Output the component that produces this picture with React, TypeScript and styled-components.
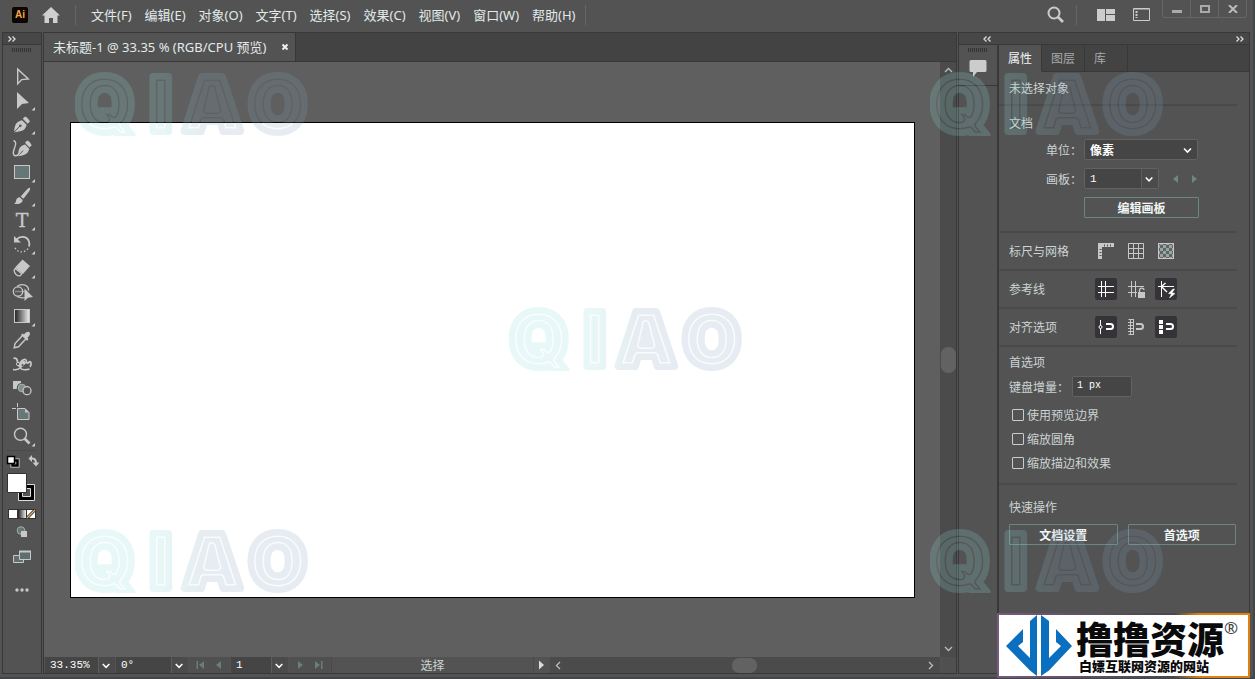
import React from "react";
import styled, { createGlobalStyle, css } from "styled-components";

const c = {
  base: "#535353",
  dark: "#434343",
  head: "#474747",
  line: "#383838",
  rule: "#4a4a4a",
  canvas: "#5f5f5f",
  field: "#454545",
  icon: "#c8c8c8",
  text: "#ccd4d3",
  bright: "#f0f5f5",
  teal: "#6b8784",
};
const sans = `"Noto Sans", "Noto Sans CJK SC", sans-serif`;
const cjk = `"Noto Sans CJK SC", sans-serif`;
const mono = `"Liberation Mono", monospace`;

const Global = createGlobalStyle`
  * { box-sizing: border-box; }
  body { margin: 0; background: ${c.base}; font: 12px/16px ${cjk}; color: ${c.text}; }
  button, input, select { font: inherit; color: inherit; margin: 0; }
  button { padding: 0; border: 0; background: none; }
  svg { display: block; flex: none; }
`;

const Window = styled.div`
  position: relative;
  display: flex;
  flex-direction: column;
  min-height: 100vh;
  background: ${c.base};
  border: solid #41464a;
  border-width: 0 2px 2px 0;
`;

/* ---------- title bar ---------- */
const TitleBar = styled.header`
  display: flex;
  align-items: center;
  height: 32px;
  padding: 0 6px 3px 12px;
`;
const AppMark = styled.span`
  width: 16px;
  height: 16px;
  margin-right: 14px;
  background: #0c0500;
  border-radius: 2px;
  color: #f5a54b;
  font: bold 10px/16px "Liberation Sans", sans-serif;
  text-align: center;
`;
const IconButton = styled.button`
  display: grid;
  place-items: center;
  flex: none;
`;
const BarRule = styled.span<{ $gap: number }>`
  width: 1px;
  height: 20px;
  margin: 0 ${(p) => p.$gap}px;
  background: #666;
`;
const Menu = styled.nav`
  display: flex;
  gap: 13px;
`;
const MenuItem = styled.button`
  font: 13px/20px ${sans};
  color: #e2eaea;
  white-space: nowrap;
`;
const Spacer = styled.div`
  flex: 1;
`;
const ViewButtons = styled.div`
  display: flex;
  align-items: center;
  gap: 18px;
  margin-left: 8px;
`;
const WindowButtons = styled.div`
  display: flex;
  align-self: flex-start;
  margin-left: 12px;
  border: 1px solid #666;
  border-top: 0;
  border-radius: 0 0 3px 3px;
  button {
    width: 27px;
    height: 17px;
  }
  button + button {
    width: 28px;
    border-left: 1px solid #666;
  }
`;

/* ---------- frame ---------- */
const Workspace = styled.div`
  flex: 1;
  display: grid;
  grid-template-columns: 40px minmax(0, 1fr) 292px;
  column-gap: 1px;
  padding: 0 3px 3px 2px;
`;
const Frame = styled.section`
  display: flex;
  flex-direction: column;
  min-width: 0;
  border: 1px solid ${c.line};
`;
const FrameHead = styled.div<{ $split?: boolean }>`
  display: flex;
  align-items: center;
  justify-content: space-between;
  height: 12px;
  padding: 0 ${(p) => (p.$split ? "5px 0 24px" : "5px")};
  background: ${c.head};
  border-bottom: 1px solid ${c.line};
`;
const Grip = styled.div`
  width: 20px;
  height: 4px;
  margin: 3px auto 0;
  background: repeating-linear-gradient(90deg, #333 0 1px, transparent 1px 2px);
`;

/* ---------- tool bar ---------- */
const ToolList = styled.div`
  display: flex;
  flex-direction: column;
  align-items: center;
  padding: 13px 0 1px;
  border-bottom: 1px solid #4a4a4a;
  margin: 0 4px;
`;
const Swatches = styled.div`
  display: flex;
  flex-direction: column;
  align-items: center;
  gap: 7px;
  padding-top: 3px;
`;
const DotsButton = styled(IconButton)`
  margin-top: 12px;
`;

/* ---------- document ---------- */
const TabBar = styled.div`
  display: flex;
  height: 29px;
  background: ${c.dark};
  border-bottom: 1px solid ${c.line};
`;
const DocTab = styled.div`
  display: flex;
  align-items: center;
  gap: 15px;
  padding: 0 6px 0 9px;
  background: ${c.base};
  border-right: 1px solid ${c.line};
  font: 13px/20px ${sans};
  color: #e2eaea;
  white-space: nowrap;
`;
const View = styled.div`
  flex: 1;
  display: flex;
  background: ${c.canvas};
`;
const Canvas = styled.div`
  flex: 1;
  display: flex;
  padding: 60px 25px 59px 26px;
`;
const Artboard = styled.div`
  flex: 1;
  background: #fff;
  border: 1px solid #000;
`;
const VScroll = styled.div`
  display: flex;
  flex-direction: column;
  align-items: center;
  justify-content: space-between;
  width: 16px;
  padding: 4px 0;
  background: #4b4b4b;
`;
const Thumb = styled.span<{ $w: number; $h: number }>`
  width: ${(p) => p.$w}px;
  height: ${(p) => p.$h}px;
  background: #626262;
  border-radius: 7px;
`;
const Status = styled.div`
  display: flex;
  height: 16px;
  gap: 1px;
  padding-left: 1px;
  background: ${c.base};
`;
const Nav = styled.div`
  display: flex;
  align-items: center;
  justify-content: space-evenly;
  width: 41px;
  background: #505050;
`;
const StatusLabel = styled.div`
  width: 203px;
  border: solid #4a4a4a;
  border-width: 0 1px;
  text-align: center;
`;
const HScroll = styled.div`
  flex: 1;
  display: flex;
  align-items: center;
  justify-content: space-between;
  padding: 0 5px 0 4px;
  background: #4b4b4b;
`;
const Corner = styled.div`
  width: 15px;
  background: #505050;
`;

/* ---------- form parts ---------- */
const Combo = styled.span<{ $w: number; $boxed?: boolean; $split?: boolean }>`
  display: grid;
  grid-template-columns: 1fr 17px;
  align-items: center;
  width: ${(p) => p.$w}px;
  height: ${(p) => (p.$boxed ? 21 : 16)}px;
  background: ${c.field};
  ${(p) =>
    p.$boxed &&
    css`
      border: 1px solid #626262;
      border-radius: 2px;
    `}
  select {
    grid-area: 1 / 1 / 2 / 3;
    width: 100%;
    height: 100%;
    padding: 0 5px;
    appearance: none;
    border: 0;
    outline: 0;
    background: none;
    color: #fff;
    font: ${(p) => (p.$split ? `11px/14px ${mono}` : `bold 12px/18px ${cjk}`)};
  }
  svg {
    grid-area: 1 / 2;
    width: 17px;
    height: 100%;
    pointer-events: none;
    ${(p) =>
      p.$split &&
      css`
        background: #4b4b4b;
        border-left: 1px solid #5e5e5e;
      `}
  }
`;
const TextBox = styled.input`
  width: 60px;
  height: 21px;
  padding: 0 4px 2px;
  background: ${c.field};
  border: 1px solid #626262;
  border-radius: 2px;
  color: #fff;
  font: 10px/14px ${mono};
`;
const PushButton = styled.button`
  height: 21px;
  border: 1px solid ${c.teal};
  border-radius: 1px;
  color: ${c.bright};
  font: bold 12px/18px ${cjk};
`;
const Check = styled.label`
  display: flex;
  align-items: center;
  gap: 3px;
  height: 24px;
  padding-left: 3px;
  input {
    appearance: none;
    width: 12px;
    height: 12px;
    border: 1px solid #c8cccc;
    border-radius: 1px;
  }
`;

/* ---------- right side ---------- */
const Side = styled.div`
  flex: 1;
  display: grid;
  grid-template-columns: 38px minmax(0, 1fr);
`;
const DockItem = styled.div`
  display: flex;
  flex-direction: column;
  height: 41px;
  border-bottom: 1px solid ${c.line};
  button {
    margin-top: 8px;
  }
`;
const Panel = styled.div`
  border-left: 2px solid ${c.line};
`;
const PanelTabs = styled.div`
  display: flex;
  height: 27px;
  background: ${c.dark};
`;
const PanelTab = styled.button<{ $on?: boolean }>`
  padding: 0 9px;
  border: solid ${c.line};
  border-width: 0 1px 1px 0;
  color: #a8a8a8;
  font: 12px/20px ${cjk};
  ${(p) =>
    p.$on &&
    css`
      background: ${c.base};
      border-bottom-color: ${c.base};
      color: ${c.bright};
    `}
`;
const TabFill = styled.div`
  flex: 1;
  border-bottom: 1px solid ${c.line};
`;
const Section = styled.section<{ $pad: string }>`
  margin-right: 12px;
  padding: ${(p) => p.$pad};
  border-bottom: 2px solid ${c.rule};
  &:last-child {
    border-bottom: 0;
  }
`;
const Units = styled.div`
  padding-top: 4px;
`;
const Field = styled.div`
  display: grid;
  grid-template-columns: 73px auto auto;
  justify-content: start;
  align-items: center;
  column-gap: 2px;
  height: 29px;
  label {
    text-align: right;
  }
`;
const BoardButton = styled(PushButton)`
  width: 115px;
  margin: 4px 0 0 75px;
`;
const Arrows = styled.span`
  display: flex;
  gap: 10px;
  margin-left: 9px;
`;
const OptionRow = styled.div`
  display: grid;
  grid-template-columns: 78px repeat(3, 22px);
  column-gap: 8px;
  align-items: center;
  height: 36px;
`;
const Toggle = styled(IconButton)<{ $on?: boolean }>`
  width: 22px;
  height: 22px;
  border-radius: 2px;
  background: ${(p) => (p.$on ? "#353337" : "none")};
  color: ${(p) => (p.$on ? "#fff" : c.icon)};
`;
const Increment = styled.div`
  display: flex;
  align-items: center;
  height: 33px;
  gap: 3px;
`;
const Pair = styled.div`
  display: grid;
  grid-template-columns: 1fr 1fr;
  gap: 10px;
  margin-top: 9px;
  margin-right: 1px;
`;

/* ---------- things lying over the window ---------- */
const Mark = styled.svg<{ $place: string }>`
  position: absolute;
  ${(p) => p.$place}
  pointer-events: none;
`;
const Banner = styled.aside`
  position: absolute;
  right: 3px;
  bottom: -1px;
  display: flex;
  align-items: center;
  width: 253px;
  height: 65px;
  padding: 0 6px 0 7px;
  background: #fff;
  border: 2px solid;
  border-image: linear-gradient(90deg, #765a7d, #4a464a 70%, #e07f12 80%) 1;
  color: #0a0a0a;
`;
const BannerText = styled.div`
  flex: 1;
  padding-left: 4px;
  white-space: nowrap;
`;
const BannerTitle = styled.div`
  display: flex;
  font: 900 37px/40px ${cjk};
  sup {
    font: 17px/20px ${sans};
    color: #444;
  }
`;
const BannerSub = styled.div`
  padding-left: 3px;
  font: 900 13px/16px ${cjk};
`;

const Chevron = () => (
  <svg width="17" height="16" viewBox="0 0 17 16" preserveAspectRatio="xMidYMid" fill="none" stroke="#fff" strokeWidth="1.6">
    <path d="M4 7l3.500 3.500L11 7" />
  </svg>
);
const Double = ({ left }: { left?: boolean }) => (
  <svg width="8" height="6" viewBox="0 0 8 6" fill="none" stroke="#ddd" strokeWidth="1.3">
    <path d={left ? "M3.5 0.5L1 3l2.5 2.5M7.5 0.5L5 3l2.5 2.5" : "M0.5 0.5L3 3 0.5 5.5M4.5 0.5L7 3 4.5 5.5"} />
  </svg>
);
const Caret = ({ d }: { d: string }) => (
  <svg width="9" height="9" viewBox="0 0 9 9" fill="none" stroke="#b5c0be" strokeWidth="1.3">
    <path d={d} />
  </svg>
);
const Tri = ({ left, end, color = "#6c7c7a" }: { left?: boolean; end?: boolean; color?: string }) => (
  <svg width="10" height="10" viewBox="0 0 10 10" fill={color}>
    <g transform={left ? "rotate(180 5 5)" : undefined}>
      <path d="M2 1l5 4-5 4z" />
      {end && <path d="M8 1h1.5v8H8z" />}
    </g>
  </svg>
);

const L = c.icon;
const D = c.base;
const tools: { name: string; more?: boolean; art: React.ReactNode }[] = [
  { name: "选择", art: <path d="M10.7 4.2v14.6l4-4.2 6.6-.6z" fill="none" stroke={L} strokeWidth="1.4" /> },
  { name: "直接选择", more: true, art: <path d="M10 3v17l5-5 7-1z" fill={L} /> },
  {
    name: "钢笔", more: true,
    art: <g fill={L}><path d="M7 19.3c.4-3 .6-6.3 2-8.6C10.5 8.8 13 7.8 15 7.2l4.600 4.600c-.4 2-1.400 4.400-3.400 5.500-2.500 1.200-6 1.500-9.200 2z" /><path d="M15.800 5.800L18 3.500c2 .8 4 2.800 5 5l-2.400 2.300z" /><path d="M7 19.300l6-6.300" stroke={D} /><circle cx="13.300" cy="12.700" r="1.300" fill={D} /></g>,
  },
  {
    name: "曲率",
    art: <g fill={L}><path d="M11 19.300c.2-3 .3-6 1.600-8.300 1.200-1.900 3.500-2.900 5.400-3.500l4.200 4.300c-.4 2-1.400 4-3.200 5.200-2.300 1.200-5 1.800-8 2.300z" /><path d="M18 5.800L20.200 3.500c2 .8 3.500 2.600 4.500 4.700l-2.300 2.400z" /><path d="M11 19.300l5-5.800" stroke={D} /><path d="M6.500 3.500c3 1 2.500 4 1 7.500-1.500 4-2 7.500 1 7.800 2 .2 3.500-1.500 4.500-3.200" fill="none" stroke={L} strokeWidth="1.400" /></g>,
  },
  { name: "矩形", more: true, art: <rect x="7.500" y="4.500" width="15" height="13" fill="#667777" stroke={L} /> },
  {
    name: "画笔", more: true,
    art: <g fill={L}><path d="M22.800 2.800c1 .8.200 2-1 4l-5.300 7-2.800-2.400 6-6.600c1.500-1.500 2.400-2.500 3.100-2z" /><path d="M12.800 12.300l2.800 2.600c-.3 3-3 4.600-8.800 4.100 2.200-.9 1.900-2.500 2.500-4.200.5-1.500 1.900-2.500 3.500-2.500z" /></g>,
  },
  { name: "文字", more: true, art: <text x="15" y="18" textAnchor="middle" fontFamily="DejaVu Serif, serif" fontSize="19" fill={L} stroke={L} strokeWidth="0.3">T</text> },
  {
    name: "旋转", more: true,
    art: <g fill="none" stroke={L} strokeWidth="1.800"><path d="M9.500 6.700C13 2.500 20 3 22 8.500c.5 1.600.5 3.400 0 5" /><path d="M21 15.500c-3.500 5-11 4.500-13.300-1.500" strokeDasharray="1.500 2" strokeWidth="1.300" /><path d="M7 3v6.500h7z" fill={L} stroke="none" /></g>,
  },
  {
    name: "橡皮擦", more: true,
    art: <g><path d="M15.500 2.500l7.500 6.500-7 8-8-6.500z" fill={L} /><path d="M8.300 11.500l6.500 5.300-1.700 2c-3 .2-5.800-2-6-5.500z" fill="none" stroke={L} strokeWidth="1.300" /></g>,
  },
  {
    name: "形状生成器",
    art: <g fill="none" stroke={L} strokeWidth="1.300"><circle cx="11" cy="10.500" r="4.700" /><path d="M10 5.600c5-4 12-1.500 11.500 4M10 15.500c2 1 5 2 8 1" /><path d="M8.500 10.500h9" strokeDasharray="1 1" /><path d="M17.500 7.500v12.500l3.500-3.300 5-.7z" fill={L} stroke="none" /></g>,
  },
  { name: "渐变", more: true, art: <rect x="7.500" y="4.500" width="15" height="13" fill="url(#ramp)" stroke={L} /> },
  {
    name: "吸管",
    art: <g><path d="M15.500 6.500l-7.500 8-.8 4.300 4.300-1 7.500-8" fill="none" stroke={L} strokeWidth="1.400" /><path d="M14 6l1.500-1.500 1.500 1c1.500-2.500 4.500-3.500 5.500-2.200 1.200 1.200.2 3.700-2 5.500l1 1.500L20 11.700z" fill={L} /></g>,
  },
  {
    name: "操控变形",
    art: <g fill="none" stroke={L}><path d="M6.500 5.500c2-1 3.500 0 3.800 2.500l1.500 4c2-3.500 4.500-6 6.500-5.500 1.500.5.500 3 2 3.500s1.500-1.500 2.700-1.300c1.500.3 1.300 4-.2 5" strokeWidth="1.800" /><path d="M6 16.500c3 .5 5 .5 7-1.500 2 2 5 2.500 9.500 1" strokeWidth="1.500" /><path d="M12 14l6-5.500" strokeWidth="4" /><circle cx="11" cy="11" r="1.600" fill={D} /><circle cx="15.500" cy="12" r="1" fill={D} stroke="none" /></g>,
  },
  {
    name: "混合",
    art: <g><path d="M6 4h8v8H6z" fill={L} /><circle cx="15" cy="11" r="4" fill="#7f908f" stroke={D} strokeWidth="2.500" /><circle cx="15" cy="11" r="3.800" fill="#7f908f" stroke="#a9b3b2" /><circle cx="20" cy="13.700" r="4" fill={D} stroke={L} strokeWidth="1.300" /></g>,
  },
  {
    name: "画板",
    art: <g><path d="M10.500 7.500h7.500l4 4v7H10.500z" fill="#667777" stroke={L} /><path d="M18 7.500l4 4h-4z" fill={L} /><path d="M5 7.500h4M10.500 2v4" stroke={L} /></g>,
  },
  { name: "缩放", more: true, art: <g fill="none" stroke={L}><circle cx="13.500" cy="9.300" r="6" strokeWidth="1.400" /><path d="M17.500 13.500l5 5" strokeWidth="2.600" /></g> },
];

const menus = ["文件(F)", "编辑(E)", "对象(O)", "文字(T)", "选择(S)", "效果(C)", "视图(V)", "窗口(W)", "帮助(H)"];
const magnet = <path d="M9 6h4.500a2.500 2.500 0 0 1 0 5H9" fill="none" stroke="currentColor" strokeWidth="2" />;

const options: { label: string; items: { name: string; on?: boolean; art: React.ReactNode }[] }[] = [
  {
    label: "标尺与网格",
    items: [
      { name: "标尺", art: <g fill="currentColor"><path d="M1 1h16v4H5v12H1z" /><path d="M7.500 2.500v2M10.500 2.500v2M13.500 2.500v2M2.500 7.500h2M2.500 10.500h2M2.500 13.500h2" stroke={D} /></g> },
      { name: "网格", art: <path d="M1.500 1.500h15v15h-15zM6.500 1.500v15M11.500 1.500v15M1.500 6.500h15M1.500 11.500h15" fill="none" stroke="currentColor" /> },
      { name: "透明度网格", art: <rect x="1.500" y="1.500" width="15" height="15" fill="url(#checks)" stroke="currentColor" /> },
    ],
  },
  {
    label: "参考线",
    items: [
      { name: "显示参考线", on: true, art: <path d="M1 6.500h16M1 12.500h16M4.500 1v16M8.500 1v16" fill="none" stroke="currentColor" /> },
      { name: "锁定参考线", art: <g><path d="M1 6.500h16M1 12.500h9M4.500 1v16M8.500 1v16" fill="none" stroke="currentColor" /><path d="M11 12h7v6h-7z" fill="currentColor" /><path d="M12.500 12v-1.500c0-3 4.500-3 4.500-.5" fill="none" stroke="currentColor" strokeWidth="1.300" /></g> },
      { name: "智能参考线", on: true, art: <g fill="none" stroke="currentColor"><path d="M1 6.500h16M4.500 1v16" /><path d="M8.500 3L4.500 6.500 10 12" strokeWidth="1.400" /><path d="M16 9l-4.500 4.500 3 .5-2 4 5.500-4.500-3-.8 2.500-3.700z" fill="currentColor" strokeWidth="0.500" /></g> },
    ],
  },
  {
    label: "对齐选项",
    items: [
      { name: "对齐点", on: true, art: <g>{magnet}<path d="M3.500 2v14" stroke="currentColor" /><circle cx="3.500" cy="9" r="1.500" fill="#353337" stroke="currentColor" /></g> },
      { name: "对齐网格", art: <g><path d="M1.500 1.500h5M1.500 16.500h5M3.500 1v16M6.500 1v16M1 4.500h6M1 7.500h6M1 10.500h6M1 13.500h6" fill="none" stroke="currentColor" />{magnet}</g> },
      { name: "对齐像素", on: true, art: <g>{magnet}<path d="M2 2h4v4H2zM2 7h4v4H2zM2 12h4v4H2z" fill="currentColor" /></g> },
    ],
  },
];

const Watermark = ({ place }: { place: string }) => (
  <Mark $place={place} width="236" height="64" viewBox="0 0 236 64" aria-hidden="true">
    <rect width="236" height="64" fill="url(#tint)" mask="url(#stripes)" opacity="0.2" />
  </Mark>
);
const Letters = (p: React.SVGProps<SVGTextElement>) => (
  <text x="1 75 108 174" y="59" fontFamily="Inter, sans-serif" fontWeight="900" fontSize="74" strokeLinejoin="round" {...p}>QIAO</text>
);
const Defs = () => (
  <svg width="0" height="0" style={{ position: "absolute" }} aria-hidden="true">
    <defs>
      <linearGradient id="ramp"><stop offset="0.1" stopColor="#333" /><stop offset="0.9" stopColor="#ddd" /></linearGradient>
      <linearGradient id="tint"><stop offset="0.35" stopColor="#8fdcd8" /><stop offset="0.55" stopColor="#84a4bc" /></linearGradient>
      <pattern id="checks" width="6" height="6" patternUnits="userSpaceOnUse"><path d="M0 0h6v6H0z" fill="#9aa5a3" /><path d="M0 0h3v3H0zM3 3h3v3H3z" fill="#5c6664" /></pattern>
      <clipPath id="letters"><Letters /></clipPath>
      <mask id="stripes" maskUnits="userSpaceOnUse" x="0" y="0" width="236" height="64">
        <Letters fill="#fff" stroke="#fff" strokeWidth="8" />
        <g clipPath="url(#letters)">
          <Letters fill="none" stroke="#333" strokeWidth="8" />
          <Letters fill="none" stroke="#fff" strokeWidth="5" />
        </g>
      </mask>
    </defs>
  </svg>
);

export default function App() {
  return (
    <Window>
      <Global />
      <Defs />
      <TitleBar>
        <AppMark>Ai</AppMark>
        <IconButton aria-label="主页">
          <svg width="18" height="16" viewBox="0 0 18 16" fill="#d0d0d0"><path d="M9 0l9 8.500h-2.500V16H11v-5H7v5H2.500V8.500H0z" /></svg>
        </IconButton>
        <BarRule $gap={15} />
        <Menu>{menus.map((m) => <MenuItem key={m}>{m}</MenuItem>)}</Menu>
        <BarRule $gap={10} />
        <Spacer />
        <IconButton aria-label="搜索">
          <svg width="17" height="17" viewBox="0 0 17 17" fill="none" stroke="#ccc"><circle cx="7" cy="7" r="5.500" strokeWidth="2" /><path d="M11 11l5 5" strokeWidth="2.600" /></svg>
        </IconButton>
        <BarRule $gap={12} />
        <ViewButtons>
          <IconButton aria-label="排列文档">
            <svg width="18" height="12" viewBox="0 0 18 12" fill="#ccc"><path d="M0 0h8v12H0zM9 0h9v5H9zM9 6h9v6H9z" /></svg>
          </IconButton>
          <IconButton aria-label="切换工作区">
            <svg width="17" height="13" viewBox="0 0 17 13" fill="none" stroke="#ccc"><path d="M.5.5h16v12H.5z" /><path d="M1 1h15" /><path d="M3.500 3v7" strokeWidth="2" strokeDasharray="2 1" /></svg>
          </IconButton>
        </ViewButtons>
        <WindowButtons>
          <IconButton aria-label="最小化"><svg width="10" height="8" viewBox="0 0 10 8"><path d="M0 5h10v3H0z" fill="#aaa" /></svg></IconButton>
          <IconButton aria-label="最大化"><svg width="10" height="8" viewBox="0 0 10 8" fill="none"><path d="M1 1h8v6H1z" stroke="#aaa" strokeWidth="2" /></svg></IconButton>
          <IconButton aria-label="关闭"><svg width="10" height="8" viewBox="0 0 10 8" fill="none"><path d="M1 0l8 8M9 0L1 8" stroke="#bbb" strokeWidth="2" /></svg></IconButton>
        </WindowButtons>
      </TitleBar>

      <Workspace>
        <Frame>
          <FrameHead><Double /></FrameHead>
          <Grip />
          <ToolList>
            {tools.map((t) => (
              <IconButton key={t.name} aria-label={t.name}>
                <svg width="30" height="24" viewBox="0 0 30 24">
                  {t.art}
                  {t.more && <path d="M28 18v3.500h-3.500z" fill="#ccc" />}
                </svg>
              </IconButton>
            ))}
          </ToolList>
          <Swatches>
            <svg width="34" height="48" viewBox="0 0 34 48">
              <path d="M7.500 6.500h5v5h-5z" fill="none" stroke="#ddd" strokeWidth="4" /><path d="M7.500 6.500h5v5h-5z" fill="none" stroke="#000" strokeWidth="2.500" /><path d="M2.500 2.500h7v7h-7z" fill="#fff" stroke="#000" strokeWidth="1.500" />
              <g transform="translate(1 0)"><path d="M24.500 4.500h2c2 0 3.500 1.500 3.500 5" fill="none" stroke={L} strokeWidth="2" /><path d="M26 1v7l-3.500-3.500zM26.500 8.500h7l-3.500 4z" fill={L} /></g>
              <path d="M13.500 30.500h16v16h-16z" fill="#000" stroke="#ddd" /><path d="M17.500 34.500h8v8h-8z" fill="#555" stroke="#ddd" />
              <path d="M2.500 19.500h19v19h-19z" fill="#fff" stroke="#333" />
            </svg>
            <svg width="28" height="10" viewBox="0 0 28 10">
              <path d="M0 0h28v10H0z" fill="#333" /><path d="M1 1h8v8H1zM19 1h8v8h-8z" fill="#fff" /><path d="M10 1h8v8h-8z" fill="url(#ramp)" /><path d="M19 9l8-8" stroke="#333" strokeWidth="3" /><path d="M19 9l8-8" stroke="#e0b070" strokeWidth="1.300" />
            </svg>
            <IconButton aria-label="绘图模式">
              <svg width="12" height="12" viewBox="0 0 12 12"><circle cx="5" cy="4.500" r="3.800" fill="#667777" stroke="#9fb0ae" /><path d="M5 5h6v6H5z" fill={L} /></svg>
            </IconButton>
            <IconButton aria-label="屏幕模式">
              <svg width="18" height="24" viewBox="0 0 18 24" fill="#5f6f6d" stroke={L}><path d="M.5 10.500h10v7H.5z" /><path d="M6.500 6.500h11v8h-11z" /><path d="M6 6.500h12" strokeWidth="2" /></svg>
            </IconButton>
          </Swatches>
          <DotsButton aria-label="编辑工具栏">
            <svg width="16" height="16" viewBox="0 0 16 16" fill={L}><circle cx="3" cy="9" r="1.700" /><circle cx="8" cy="9" r="1.700" /><circle cx="13" cy="9" r="1.700" /></svg>
          </DotsButton>
        </Frame>

        <Frame>
          <TabBar>
            <DocTab>
              <span>未标题-1 @ 33.35 % (RGB/CPU 预览)</span>
              <IconButton aria-label="关闭文档"><svg width="8" height="8" viewBox="0 0 8 8"><path d="M1.500 1.500l5 5M6.500 1.500l-5 5" stroke="#eee" strokeWidth="2" /></svg></IconButton>
            </DocTab>
          </TabBar>
          <View>
            <Canvas><Artboard /></Canvas>
            <VScroll>
              <Caret d="M1 6l3.500-3.500L8 6" />
              <Thumb $w={15} $h={26} />
              <Caret d="M1 3l3.500 3.500L8 3" />
            </VScroll>
          </View>
          <Status>
            <Combo $w={70} $split><select aria-label="缩放级别"><option>33.35%</option></select><Chevron /></Combo>
            <Combo $w={72} $split><select aria-label="旋转角度"><option>0°</option></select><Chevron /></Combo>
            <Nav><Tri left end /><Tri left /></Nav>
            <Combo $w={57} $split><select aria-label="画板导航"><option>1</option></select><Chevron /></Combo>
            <Nav><Tri /><Tri end /></Nav>
            <StatusLabel>选择</StatusLabel>
            <IconButton aria-label="状态菜单"><svg width="14" height="12" viewBox="0 0 14 12"><path d="M4 1.500v9l5-4.500z" fill="#ddd" /></svg></IconButton>
            <HScroll>
              <Caret d="M6 1L2.500 4.500 6 8" />
              <Thumb $w={25} $h={15} />
              <Caret d="M3 1l3.500 3.500L3 8" />
            </HScroll>
            <Corner />
          </Status>
        </Frame>

        <Frame>
          <FrameHead $split><Double left /><Double /></FrameHead>
          <Side>
            <div>
              <DockItem>
                <Grip />
                <IconButton aria-label="注释"><svg width="18" height="17" viewBox="0 0 18 17"><path d="M2 0h14a1.500 1.500 0 0 1 1.500 1.500v9A1.500 1.500 0 0 1 16 12H8l-4 5v-5H2a1.500 1.500 0 0 1-1.500-1.500v-9A1.500 1.500 0 0 1 2 0z" fill="#ccc" /></svg></IconButton>
              </DockItem>
            </div>
            <Panel>
              <PanelTabs>
                <PanelTab $on>属性</PanelTab>
                <PanelTab>图层</PanelTab>
                <PanelTab>库&emsp;</PanelTab>
                <TabFill />
              </PanelTabs>
              <Section $pad="8px 0 8px 10px">未选择对象</Section>
              <Section $pad="9px 0 13px 10px">
                文档
                <Units>
                  <Field>
                    <label htmlFor="unit">单位：</label>
                    <Combo $w={114} $boxed><select id="unit"><option>像素</option></select><Chevron /></Combo>
                  </Field>
                  <Field>
                    <label htmlFor="board">画板：</label>
                    <Combo $w={75} $boxed $split><select id="board"><option>1</option></select><Chevron /></Combo>
                    <Arrows><Tri left color={c.teal} /><Tri color={c.teal} /></Arrows>
                  </Field>
                  <BoardButton>编辑画板</BoardButton>
                </Units>
              </Section>
              {options.map((o) => (
                <Section key={o.label} $pad="0 0 0 10px">
                  <OptionRow>
                    <span>{o.label}</span>
                    {o.items.map((i) => (
                      <Toggle key={i.name} $on={i.on} aria-label={i.name}>
                        <svg width="18" height="18" viewBox="0 0 18 18">{i.art}</svg>
                      </Toggle>
                    ))}
                  </OptionRow>
                </Section>
              ))}
              <Section $pad="7px 0 8px 10px">
                首选项
                <Increment>
                  <label htmlFor="step">键盘增量：</label>
                  <TextBox id="step" defaultValue="1 px" />
                </Increment>
                {["使用预览边界", "缩放圆角", "缩放描边和效果"].map((t) => (
                  <Check key={t}><input type="checkbox" />{t}</Check>
                ))}
              </Section>
              <Section $pad="14px 0 0 10px">
                快速操作
                <Pair>
                  <PushButton>文档设置</PushButton>
                  <PushButton>首选项</PushButton>
                </Pair>
              </Section>
            </Panel>
          </Side>
        </Frame>
      </Workspace>

      <Watermark place="left: 75px; top: 72px;" />
      <Watermark place="left: 75px; bottom: 84px;" />
      <Watermark place="left: calc(50% - 118px); top: calc(50% - 32px);" />
      <Watermark place="right: 87px; top: 72px;" />
      <Watermark place="right: 87px; bottom: 84px;" />

      <Banner>
        <svg width="66" height="61" viewBox="0 0 66 61" fill="#0b6fc0">
          <path d="M24 6l7-6v61l-7-5.500L0 31l17-17v13l-5 4 12 12z" />
          <path d="M35 0l8 6v37l12-12-5-4V14l16 17-23 24.500L35 61z" />
        </svg>
        <BannerText>
          <BannerTitle>撸撸资源<sup>®</sup></BannerTitle>
          <BannerSub>白嫖互联网资源的网站</BannerSub>
        </BannerText>
      </Banner>
    </Window>
  );
}
